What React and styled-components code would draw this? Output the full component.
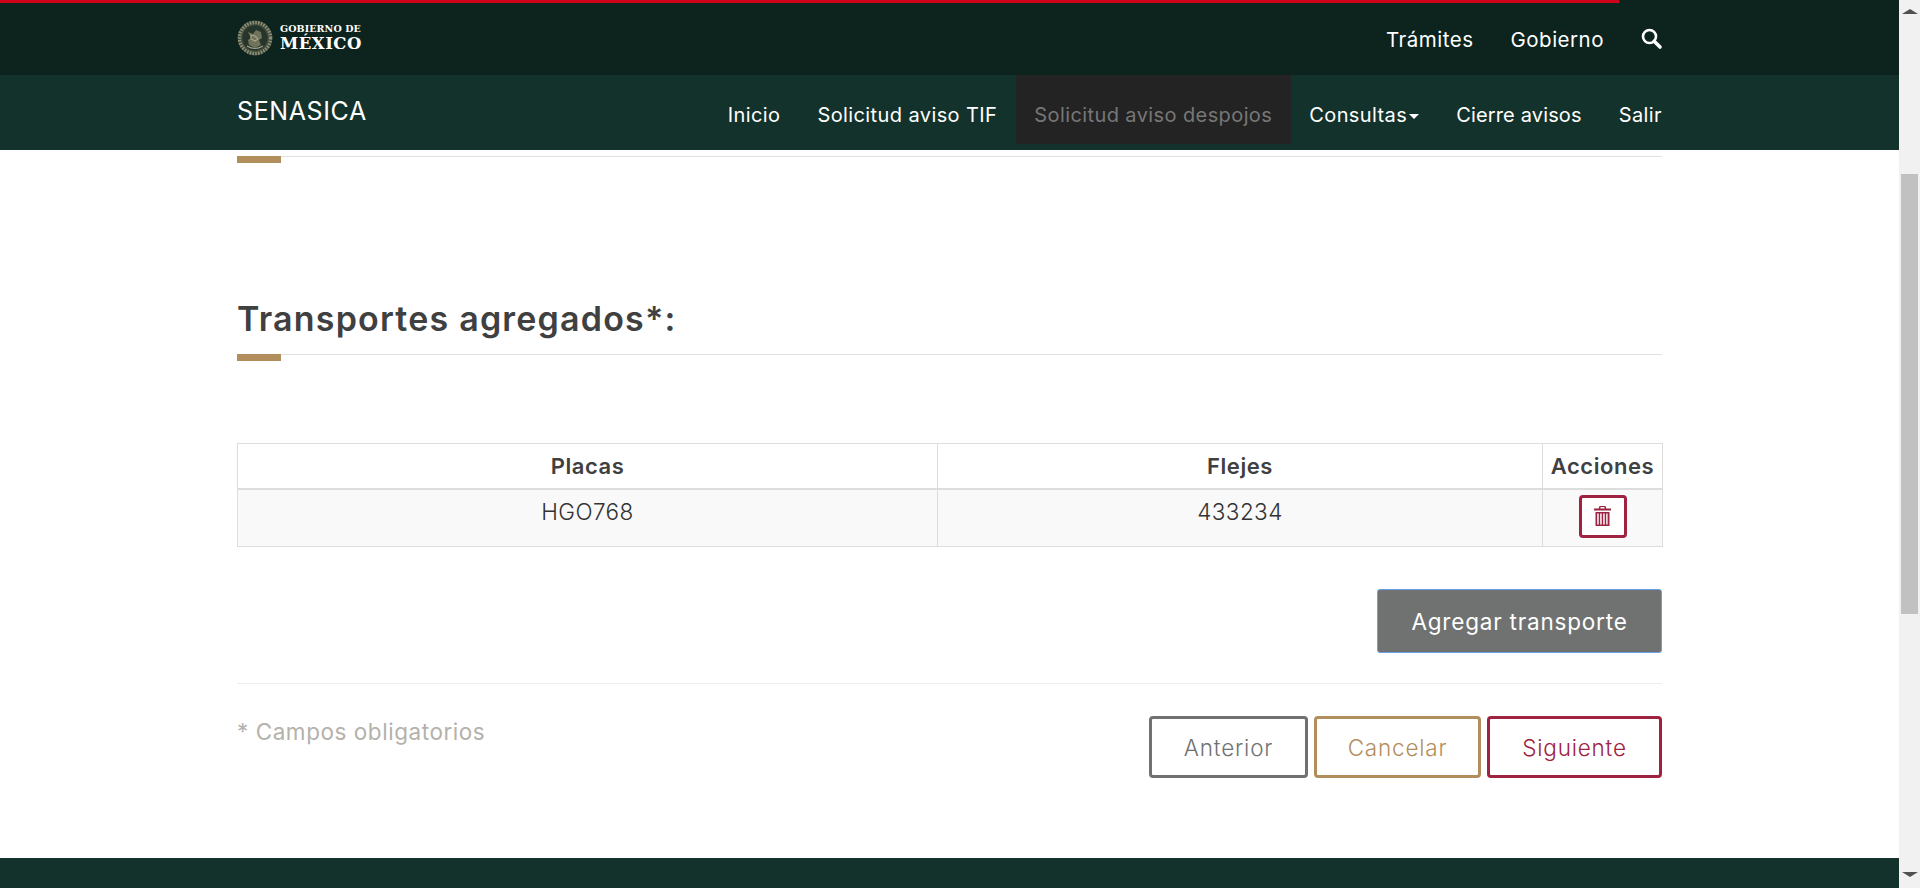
import React from "react";
import styled, { createGlobalStyle } from "styled-components";

const GlobalStyle = createGlobalStyle`
  html, body {
    margin: 0;
    padding: 0;
    height: 100%;
    overflow: hidden;
    background: #fff;
  }
  body {
    font-family: Inter, "Open Sans", sans-serif;
    color: #404041;
  }
  * {
    box-sizing: border-box;
  }
`;

const Shell = styled.div`
  display: flex;
  width: 1920px;
  height: 888px;
`;

const Page = styled.div`
  display: flex;
  flex-direction: column;
  width: 1899px;
  height: 100%;
`;

const TopBar = styled.header`
  position: relative;
  display: flex;
  align-items: center;
  justify-content: space-between;
  height: 75px;
  padding: 3px 236px 0 237px;
  background: #0c231e;
  &::before {
    content: "";
    position: absolute;
    top: 0;
    left: 0;
    width: 1619px;
    height: 3px;
    background: #d0021b;
  }
`;

const Brand = styled.div`
  display: flex;
  align-items: center;
  gap: 7px;
  margin-top: -3px;
`;

const BrandText = styled.div`
  display: flex;
  flex-direction: column;
  font-family: "DejaVu Serif", serif;
  font-weight: 700;
  color: #fff;
`;

const BrandSmall = styled.span`
  font-size: 9.5px;
  line-height: 11px;
  letter-spacing: 0.1px;
`;

const BrandBig = styled.span`
  font-size: 16.5px;
  line-height: 19px;
  letter-spacing: 0.5px;
`;

const TopLinks = styled.nav`
  display: flex;
  align-items: center;
  gap: 37px;
`;

const TopLink = styled.a`
  font-size: 20.5px;
  letter-spacing: 0.5px;
  color: #fff;
`;

const NavBar = styled.nav`
  display: flex;
  align-items: flex-start;
  justify-content: space-between;
  height: 75px;
  padding: 0 237px;
  background: #13322b;
`;

const AppName = styled.div`
  margin-top: 21px;
  font-size: 25px;
  line-height: 30px;
  letter-spacing: 0.6px;
  color: #fff;
`;

const NavItems = styled.div`
  display: flex;
  margin-right: -18.5px;
`;

const NavItem = styled.a`
  display: flex;
  align-items: center;
  height: 69px;
  padding: 11px 18.5px 0;
  font-size: 20px;
  letter-spacing: ${(props) => props.$tracking || "0.4px"};
  white-space: nowrap;
  color: ${(props) => (props.$active ? "#777" : "#fff")};
  background: ${(props) => (props.$active ? "#232323" : "transparent")};
`;

const Caret = styled.span`
  width: 0;
  height: 0;
  margin: 2px 0 0 2px;
  border-top: 5px solid #fff;
  border-left: 5px solid transparent;
  border-right: 5px solid transparent;
`;

const Main = styled.main`
  flex: 1;
  padding: 6px 237px 0;
  background: #fff;
`;

const Rule = styled.div`
  height: 1px;
  background: #e0e0e0;
  &::after {
    content: "";
    display: block;
    width: 44px;
    height: 7px;
    background: #b38e5d;
  }
`;

const SectionTitle = styled.h2`
  margin: 133px 0 0;
  height: 64px;
  font-size: 34px;
  line-height: 58px;
  font-weight: 600;
  letter-spacing: 1.2px;
  color: #404041;
`;

const Table = styled.table`
  width: 100%;
  margin-top: 88px;
  border-collapse: collapse;
  table-layout: fixed;
`;

const HeadCell = styled.th`
  height: 45px;
  padding: 0;
  border: 1px solid #ddd;
  border-bottom-width: 2px;
  font-size: 22px;
  font-weight: 600;
  letter-spacing: 0.55px;
  text-align: center;
  color: #404041;
  background: #fff;
`;

const Cell = styled.td`
  height: 58px;
  padding: 8px 0 0;
  border: 1px solid #ddd;
  vertical-align: top;
  font-size: 22.5px;
  font-weight: 300;
  line-height: 28px;
  letter-spacing: 0.4px;
  text-align: center;
  color: #333;
  background: #f9f9f9;
`;

const ActionCell = styled(Cell)`
  padding-top: 5px;
`;

const IconButton = styled.button`
  display: inline-flex;
  align-items: center;
  justify-content: center;
  width: 48px;
  height: 43px;
  padding: 0;
  border: 3px solid #9f2241;
  border-radius: 4px;
  background: #fff;
`;

const ActionRow = styled.div`
  display: flex;
  justify-content: flex-end;
  margin-top: 42px;
`;

const AddButton = styled.button`
  width: 285px;
  height: 64px;
  padding: 0;
  border: 1px solid #6a9ee6;
  border-radius: 3px;
  font-family: inherit;
  font-size: 22.5px;
  letter-spacing: 0.8px;
  color: #fff;
  background: #6f7271;
`;

const Divider = styled.hr`
  margin: 30px 0 0;
  border: 0;
  border-top: 1px solid #eee;
`;

const FormFooter = styled.div`
  display: flex;
  justify-content: space-between;
  align-items: flex-start;
  margin-top: 32px;
`;

const Required = styled.span`
  margin-top: 2px;
  font-size: 22.5px;
  line-height: 28px;
  letter-spacing: 0.55px;
  color: #b5b1ab;
`;

const Buttons = styled.div`
  display: flex;
  gap: 6px;
`;

const OutlineButton = styled.button`
  width: ${(props) => props.$width}px;
  height: 62px;
  padding: 0;
  border: 3px solid ${(props) => props.$color};
  border-radius: 4px;
  font-family: inherit;
  font-size: 22.5px;
  font-weight: 350;
  letter-spacing: 0.8px;
  color: ${(props) => props.$color};
  background: #fff;
`;

const PageFooter = styled.footer`
  height: 30px;
  background: #13322b;
`;

const ScrollTrack = styled.div`
  display: flex;
  flex-direction: column;
  align-items: center;
  width: 21px;
  height: 100%;
  background: #f1f1f1;
`;

const ScrollThumb = styled.div`
  width: 17px;
  height: 440px;
  margin-top: 160px;
  background: #c1c1c1;
`;

const ScrollArrow = styled.span`
  width: 0;
  height: 0;
  border-left: 8px solid transparent;
  border-right: 8px solid transparent;
  margin-top: ${(props) => (props.$down ? "258px" : "9px")};
  border-bottom: ${(props) => (props.$down ? "0" : "5px solid #505050")};
  border-top: ${(props) => (props.$down ? "5px solid #505050" : "0")};
`;

function Seal() {
  return (
    <svg width="36" height="36" viewBox="0 0 36 36">
      <circle cx="18" cy="18" r="17.5" fill="#3d4a3c" />
      <circle cx="18" cy="18" r="15.5" fill="none" stroke="#8f8f76" strokeWidth="3.4" strokeDasharray="1.6 1.2" />
      <circle cx="18" cy="18" r="12.4" fill="#26352c" />
      <path d="M11 12l5 2 3-4 5 2 1 6-3 2 2 5-6 3-6-3-1-5 3-2z" fill="#70735c" />
      <path d="M14 15l4 1 3 3-3 2-4-2zM10 26q8 5 16 0" fill="none" stroke="#a8a588" strokeWidth="1.1" />
    </svg>
  );
}

function SearchIcon() {
  return (
    <svg width="22" height="22" viewBox="0 0 22 22">
      <circle cx="8.5" cy="8.5" r="6.5" fill="none" stroke="#fff" strokeWidth="2.6" />
      <path d="M13.2 13.2L19 19" stroke="#fff" strokeWidth="3.6" strokeLinecap="round" />
    </svg>
  );
}

function TrashIcon() {
  return (
    <svg width="17" height="20" viewBox="0 0 17 20">
      <path fill="#9f2241" d="M5.5 0h6l.8 2.4H17v2.2H0V2.4h4.7zM6.6 1.1l-.3 1.3h4.4l-.3-1.3z" fillRule="evenodd" />
      <path
        fill="#9f2241"
        d="M1.5 6h14v14h-14zM3.2 7.5v11h1.5v-11zm3 0v11h1.5v-11zm3 0v11h1.5v-11zm3 0v11h1.4v-11z"
        fillRule="evenodd"
      />
    </svg>
  );
}

export default function App() {
  return (
    <Shell>
      <GlobalStyle />
      <Page>
        <TopBar>
          <Brand>
            <Seal />
            <BrandText>
              <BrandSmall>GOBIERNO DE</BrandSmall>
              <BrandBig>MÉXICO</BrandBig>
            </BrandText>
          </Brand>
          <TopLinks>
            <TopLink>Trámites</TopLink>
            <TopLink>Gobierno</TopLink>
            <SearchIcon />
          </TopLinks>
        </TopBar>
        <NavBar>
          <AppName>SENASICA</AppName>
          <NavItems>
            <NavItem>Inicio</NavItem>
            <NavItem>Solicitud aviso TIF</NavItem>
            <NavItem $active>Solicitud aviso despojos</NavItem>
            <NavItem>
              Consultas
              <Caret />
            </NavItem>
            <NavItem $tracking="0.15px">Cierre avisos</NavItem>
            <NavItem>Salir</NavItem>
          </NavItems>
        </NavBar>
        <Main>
          <Rule />
          <SectionTitle>Transportes agregados*:</SectionTitle>
          <Rule />
          <Table>
            <colgroup>
              <col style={{ width: 700 }} />
              <col style={{ width: 605 }} />
              <col style={{ width: 120 }} />
            </colgroup>
            <thead>
              <tr>
                <HeadCell>Placas</HeadCell>
                <HeadCell>Flejes</HeadCell>
                <HeadCell>Acciones</HeadCell>
              </tr>
            </thead>
            <tbody>
              <tr>
                <Cell>HGO768</Cell>
                <Cell>433234</Cell>
                <ActionCell>
                  <IconButton aria-label="Eliminar">
                    <TrashIcon />
                  </IconButton>
                </ActionCell>
              </tr>
            </tbody>
          </Table>
          <ActionRow>
            <AddButton>Agregar transporte</AddButton>
          </ActionRow>
          <Divider />
          <FormFooter>
            <Required>* Campos obligatorios</Required>
            <Buttons>
              <OutlineButton $color="#6f7271" $width={159}>Anterior</OutlineButton>
              <OutlineButton $color="#b38e5d" $width={167}>Cancelar</OutlineButton>
              <OutlineButton $color="#9f2241" $width={175}>Siguiente</OutlineButton>
            </Buttons>
          </FormFooter>
        </Main>
        <PageFooter />
      </Page>
      <ScrollTrack>
        <ScrollArrow />
        <ScrollThumb />
        <ScrollArrow $down />
      </ScrollTrack>
    </Shell>
  );
}
